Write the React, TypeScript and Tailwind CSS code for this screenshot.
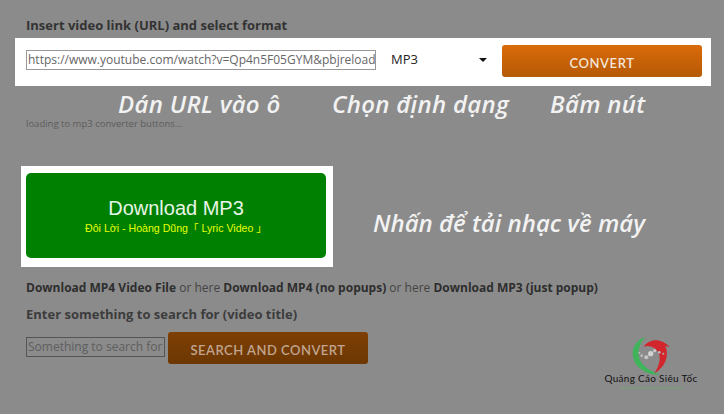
const openSans = { fontFamily: '"Open Sans", sans-serif' }
const lato = { fontFamily: '"Lato", sans-serif' }

function Logo() {
  return (
    <div className="flex w-[92px] flex-col items-center">
      <svg width="40" height="40" viewBox="125 45 120 120" className="block">
        {/* green swirl */}
        <path d="M168 50 C140 60 126 85 131 110 C137 142 170 166 214 164 C186 156 160 140 151 118 C144 100 147 74 168 50 Z" fill="#3fb45a" />
        {/* red swirl */}
        <path d="M163 80 C178 58 215 50 241 82 L228 77 C241 110 226 142 195 160 C211 136 216 112 206 96 C196 81 180 75 163 80 Z" fill="#d2262c" />
        <circle cx="150" cy="98" r="3" fill="#b9b9b9" />
        <circle cx="157" cy="107" r="4" fill="#bdbdbd" />
        <circle cx="171" cy="112" r="6" fill="#c6c6c6" />
        <circle cx="184" cy="101" r="8" fill="#d2d2d2" />
        <circle cx="196" cy="92" r="5" fill="#c6c6c6" />
        <circle cx="210" cy="97" r="4" fill="#bdbdbd" />
        <circle cx="222" cy="101" r="3" fill="#b0b0b0" />
      </svg>
      <span className="-mt-[2px] text-[10px] leading-[10px] tracking-[0.3px] whitespace-nowrap text-[#111]" style={lato}>
        Quảng Cáo Siêu Tốc
      </span>
      <div className="mt-[4px] h-[2px] w-[62px] bg-[#7f987f]" />
    </div>
  )
}

export default function App() {
  return (
    <div className="flex h-[414px] w-[724px] flex-col overflow-hidden bg-[#8b8b8b]" style={openSans}>
      <h2 className="mt-[16px] ml-[26px] text-[13px] leading-[18px] font-bold text-[#333]">
        Insert video link (URL) and select format
      </h2>

      {/* URL row */}
      <div className="mt-[4px] ml-[15px] flex h-[48px] w-[696px] items-start bg-white">
        <div className="mt-[12px] ml-[11px] flex h-[20px] w-[350px] items-center overflow-hidden border border-[#999] pl-[1px] text-[12px] whitespace-nowrap text-[#666]">
          https://www.youtube.com/watch?v=Qp4n5F05GYM&amp;pbjreload
        </div>
        <div className="mt-[12px] ml-[15px] flex h-[20px] w-[97px] items-center justify-between text-[13px] text-[#222]">
          <span>MP3</span>
          <svg width="8" height="4" viewBox="0 0 8 4" className="mr-[1px]">
            <path d="M0 0 H8 L4 4 Z" fill="#111" />
          </svg>
        </div>
        <button className="mt-[7px] ml-[14px] h-[32px] w-[200px] rounded-[3px] bg-gradient-to-b from-[#da6a0a] to-[#b55a06] pt-[6px] text-[13px] font-semibold tracking-[0.6px] text-[#f4e6d8]" style={lato}>
          CONVERT
        </button>
      </div>

      {/* captions */}
      <div className="mt-[2px] flex h-[32px] items-center text-[24px] leading-[32px] font-semibold tracking-[0.3px] whitespace-nowrap text-[#f2f2f2] italic">
        <span className="ml-[118px] w-[214px]">Dán URL vào ô</span>
        <span className="w-[218px]">Chọn định dạng</span>
        <span>Bấm nút</span>
      </div>

      <p className="-mt-[2px] ml-[26px] text-[9.5px] leading-[12px] text-[#5c5c5c]">loading to mp3 converter buttons...</p>

      {/* download */}
      <div className="mt-[36px] flex items-center">
        <div className="ml-[21px] h-[101px] w-[312px] bg-white p-[5px] pt-[7px]">
          <button className="flex h-[85px] w-[300px] flex-col items-center justify-center rounded-[5px] bg-[#008000]" style={{ fontFamily: '"Liberation Sans", "Noto Sans CJK JP", sans-serif' }}>
            <span className="text-[20px] leading-[24px] text-[#e8f5e8]">Download MP3</span>
            <span className="mt-[2px] text-[10.6px] leading-[13px] text-[#e6ff00]">Đôi Lời - Hoàng Dũng「 Lyric Video 」</span>
          </button>
        </div>
        <span className="mt-[12px] ml-[40px] text-[24px] leading-[32px] font-semibold whitespace-nowrap text-[#f2f2f2] italic">
          Nhấn để tải nhạc về máy
        </span>
      </div>

      <p className="mt-[13px] ml-[26px] text-[12px] leading-[16px] whitespace-nowrap text-[#444]">
        <b className="text-[#2e2e2e]">Download MP4 Video File</b> or here <b className="text-[#2e2e2e]">Download MP4 (no popups)</b> or here <b className="text-[#2e2e2e]">Download MP3 (just popup)</b>
      </p>
      <h3 className="mt-[9px] ml-[26px] text-[13px] leading-[18px] font-bold text-[#3c3c3c]">
        Enter something to search for (video title)
      </h3>

      {/* search row and logo */}
      <div className="mt-[9px] flex items-start">
        <div className="mt-[5px] ml-[26px] flex h-[20px] w-[139px] items-center overflow-hidden border border-[#555] pl-[1px] text-[12px] whitespace-nowrap text-[#5e5e5e]">
          Something to search for
        </div>
        <button className="ml-[3px] h-[32px] w-[200px] rounded-[3px] bg-gradient-to-b from-[#7e3f05] to-[#6c3703] pt-[6px] text-[13px] font-semibold tracking-[0.5px] text-[#c0a58f]" style={lato}>
          SEARCH AND CONVERT
        </button>
        <div className="mt-[3px] ml-[237px]">
          <Logo />
        </div>
      </div>
    </div>
  )
}
